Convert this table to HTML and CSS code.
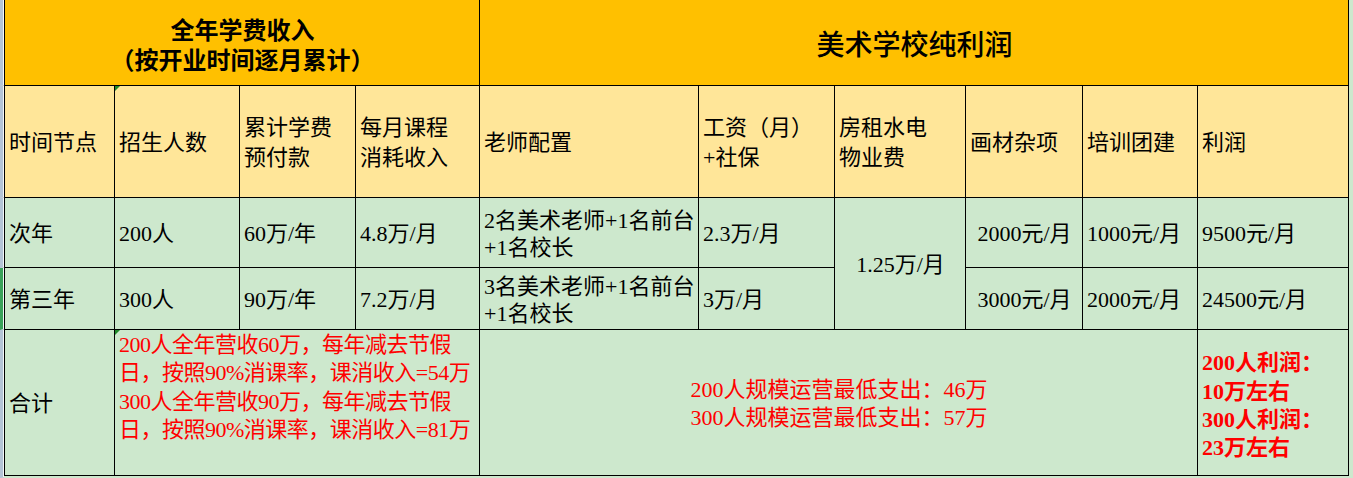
FILE: index.html
```html
<!DOCTYPE html>
<html lang="zh-CN">
<head>
<meta charset="utf-8">
<title>美术学校纯利润</title>
<link rel="stylesheet" href="styles.css">
</head>
<body>
<div class="wrap">
  <div class="rowhdr">
    <div class="rh rh1"></div>
    <div class="rh rh2"></div>
    <div class="rh rh3"></div>
    <div class="rh rh4 sel"></div>
    <div class="rh rh5"></div>
  </div>
  <div class="sheet">
    <div class="c head span4 center bold big1"><span class="t">全年学费收入<br>（按开业时间逐月累计）</span></div>
    <div class="c head span6 center big2"><span class="t">美术学校纯利润</span></div>

    <div class="c sub"><span class="t">时间节点</span></div>
    <div class="c sub mark"><span class="t">招生人数</span></div>
    <div class="c sub"><span class="t l30">累计学费<br>预付款</span></div>
    <div class="c sub"><span class="t l30">每月课程<br>消耗收入</span></div>
    <div class="c sub"><span class="t">老师配置</span></div>
    <div class="c sub"><span class="t l30">工资（月）<br>+社保</span></div>
    <div class="c sub"><span class="t l30">房租水电<br>物业费</span></div>
    <div class="c sub"><span class="t">画材杂项</span></div>
    <div class="c sub"><span class="t">培训团建</span></div>
    <div class="c sub"><span class="t">利润</span></div>

    <div class="c data"><span class="t">次年</span></div>
    <div class="c data"><span class="t">200人</span></div>
    <div class="c data"><span class="t">60万/年</span></div>
    <div class="c data"><span class="t">4.8万/月</span></div>
    <div class="c data"><span class="t l27">2名美术老师+1名前台<br>+1名校长</span></div>
    <div class="c data"><span class="t">2.3万/月</span></div>
    <div class="c data rspan2 center"><span class="t">1.25万/月</span></div>
    <div class="c data center"><span class="t">2000元/月</span></div>
    <div class="c data"><span class="t">1000元/月</span></div>
    <div class="c data"><span class="t">9500元/月</span></div>

    <div class="c data"><span class="t">第三年</span></div>
    <div class="c data"><span class="t">300人</span></div>
    <div class="c data"><span class="t">90万/年</span></div>
    <div class="c data"><span class="t">7.2万/月</span></div>
    <div class="c data"><span class="t l27">3名美术老师+1名前台<br>+1名校长</span></div>
    <div class="c data"><span class="t">3万/月</span></div>
    <div class="c data center"><span class="t">3000元/月</span></div>
    <div class="c data"><span class="t">2000元/月</span></div>
    <div class="c data"><span class="t">24500元/月</span></div>

    <div class="c data"><span class="t">合计</span></div>
    <div class="c data span3 top red mark tight"><span class="t l28">200人全年营收60万，每年减去节假<br>日，按照90%消课率，课消收入=54万<br>300人全年营收90万，每年减去节假<br>日，按照90%消课率，课消收入=81万</span></div>
    <div class="c data span5 center red"><span class="t l28">200人规模运营最低支出：46万<br>300人规模运营最低支出：57万</span></div>
    <div class="c data red bold lower"><span class="t l28">200人利润：<br>10万左右<br>300人利润：<br>23万左右</span></div>
  </div>
</div>
</body>
</html>
```

FILE: styles.css
```css
html, body {
  margin: 0;
  padding: 0;
}
body {
  background: #cde8cd;
  width: 1353px;
  height: 478px;
  overflow: hidden;
  font-family: "Liberation Serif", "Noto Sans CJK SC", serif;
  font-size: 22px;
  color: #000;
}
.wrap {
  display: flex;
  align-items: flex-start;
}
.rowhdr {
  width: 4px;
  display: flex;
  flex-direction: column;
  background: #f4f6f8;
}
.rh {
  border-left: 3px solid #b4c4d6;
  box-sizing: border-box;
  border-bottom: 1px solid #c8ced6;
}
.rh1 { height: 86px; }
.rh2 { height: 112px; }
.rh3 { height: 70px; }
.rh4 { height: 62px; }
.rh5 { height: 148px; }
.rh.sel { border-left-color: #3aa35a; }

.sheet {
  display: grid;
  grid-template-columns: 109px 124px 115px 123px 218px 135px 130px 116px 114px 150px;
  grid-template-rows: 85px 111px 69px 61px 145px;
  gap: 1px;
  background: #000;
  padding: 0 1px 1px 1px;
}
.c {
  position: relative;
  display: flex;
  align-items: center;
  justify-content: flex-start;
  padding: 3px 3px 0 4px;
  white-space: nowrap;
  line-height: 28px;
}
.t { display: block; }
.head { background: #ffc000; padding-top: 6px; }
.sub { background: #ffe699; }
.data { background: #cde8cd; }
.span3 { grid-column: span 3; }
.span4 { grid-column: span 4; }
.span5 { grid-column: span 5; }
.span6 { grid-column: span 6; }
.rspan2 { grid-row: span 2; }
.center { justify-content: center; text-align: center; }
.top { align-items: flex-start; padding-top: 1px; }
.tight { letter-spacing: -0.5px; }
.lower { padding-top: 7px; }
.bold { font-weight: bold; }
.red { color: #ff0000; }
.big1 { font-size: 24px; }
.big1 .t { line-height: 30px; }
.big2 { font-size: 28px; font-weight: 500; }
.l30 { line-height: 30px; }
.l27 { line-height: 27px; }
.l28 { line-height: 28.4px; }
.mark::before {
  content: "";
  position: absolute;
  left: 0;
  top: 0;
  border-top: 5px solid #1f8a2a;
  border-right: 5px solid transparent;
}
```
